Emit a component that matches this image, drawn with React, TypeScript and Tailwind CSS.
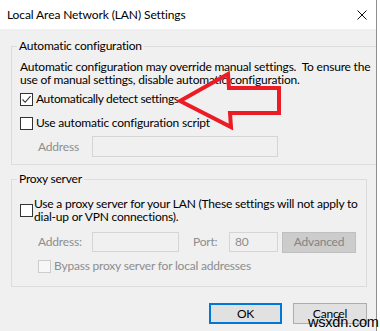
import React from "react";

function CheckBox({ checked = false, disabled = false }: { checked?: boolean; disabled?: boolean }) {
  return (
    <span
      className={
        disabled
          ? "flex h-[13px] w-[13px] shrink-0 items-center justify-center border border-[#cccccc] bg-[#f7f7f7]"
          : "flex h-[13px] w-[13px] shrink-0 items-center justify-center border border-[#333333] bg-white"
      }
    >
      {checked && (
        <svg width="11" height="11" viewBox="0 0 11 11">
          <path d="M1.5 5.5 L4.2 8.3 L9.5 2.2" stroke="#333333" strokeWidth="1.1" fill="none" />
        </svg>
      )}
    </span>
  );
}

export default function App() {
  return (
    <div className="relative flex h-[331px] w-[380px] overflow-hidden bg-white font-['Lato',sans-serif] text-[12px] tracking-[-0.2px] text-black">
      {/* Dialog window */}
      <div className="flex h-full w-[377px] shrink-0 flex-col border-r border-[#8f8f8f]">
        {/* Title bar */}
        <div className="flex h-[29px] shrink-0 items-center justify-between bg-white pl-[7px] pr-[9px]">
          <span className="text-[12px] tracking-[-0.1px]">Local Area Network (LAN) Settings</span>
          <svg width="10" height="10" viewBox="0 0 10 10">
            <path d="M0.5 0.5 L9.5 9.5 M9.5 0.5 L0.5 9.5" stroke="#111" strokeWidth="1" />
          </svg>
        </div>

        {/* Body */}
        <div className="flex flex-1 flex-col overflow-hidden bg-[#f0f0f0]">
          {/* Automatic configuration */}
          <fieldset className="ml-[11px] mt-[9px] w-[356px] shrink-0 border border-[#dcdcdc] px-[8px] pb-[7px] pt-[6px]">
            <legend className="-ml-[3px] px-[2px] leading-[16px]">Automatic configuration</legend>
            <p className="whitespace-pre leading-[13px]">
              {"Automatic configuration may override manual settings.  To ensure the\nuse of manual settings, disable automatic configuration."}
            </p>
            <label className="mt-[5px] flex h-[16px] items-center gap-[3px]">
              <CheckBox checked />
              <span className="tracking-[-0.35px]">Automatically detect settings</span>
            </label>
            <label className="mt-[8px] flex h-[16px] items-center gap-[3px]">
              <CheckBox />
              <span>Use automatic configuration script</span>
            </label>
            <div className="mt-[5px] flex h-[21px] items-center pl-[18px]">
              <span className="w-[54px] text-[#8d8d8d]">Address</span>
              <div className="h-[21px] w-[186px] border border-[#d5d5d5] bg-[#f0f0f0]" />
            </div>
          </fieldset>

          {/* Proxy server */}
          <fieldset className="ml-[11px] mt-[6px] w-[356px] shrink-0 border border-[#dcdcdc] px-[8px] pb-[12px] pt-[10px]">
            <legend className="-ml-[3px] px-[2px] leading-[16px]">Proxy server</legend>
            <label className="flex items-center gap-[1px]">
              <CheckBox />
              <span className="whitespace-pre leading-[13px]">
                {"Use a proxy server for your LAN (These settings will not apply to\ndial-up or VPN connections)."}
              </span>
            </label>
            <div className="mt-[9px] flex h-[20px] items-center pl-[18px]">
              <span className="w-[54px] text-[#8d8d8d]">Address:</span>
              <div className="h-[20px] w-[87px] border border-[#d5d5d5] bg-[#f0f0f0]" />
              <span className="ml-[14px] w-[36px] text-[#8d8d8d]">Port:</span>
              <div className="flex h-[20px] w-[49px] items-center border border-[#d5d5d5] bg-[#f0f0f0] pl-[5px] text-[#8d8d8d]">
                80
              </div>
              <div className="ml-[4px] flex h-[21px] w-[74px] items-center justify-center border border-[#bfbfbf] bg-[#cccccc] text-[#838383]">
                Advanced
              </div>
            </div>
            <label className="mt-[6px] flex h-[16px] items-center gap-[3px] pl-[18px]">
              <CheckBox disabled />
              <span className="text-[#8d8d8d]">Bypass proxy server for local addresses</span>
            </label>
          </fieldset>

          {/* Buttons */}
          <div className="mt-[16px] flex shrink-0 justify-end gap-[11px] pr-[9px]">
            <button className="h-[21px] w-[73px] border-2 border-[#0078d7] bg-[#e1e1e1]">OK</button>
            <button className="h-[21px] w-[74px] border border-[#adadad] bg-[#e1e1e1]">Cancel</button>
          </div>
        </div>
      </div>

      {/* Red annotation arrow */}
      <svg className="pointer-events-none absolute left-0 top-0" width="380" height="331" viewBox="0 0 380 331">
        <polygon
          points="180,101 228,74 229,88 279,88 279,113 230,113 231,127"
          fill="none"
          stroke="#ec1c24"
          strokeWidth="4"
          strokeLinejoin="miter"
        />
      </svg>

      {/* Watermark */}
      <span className="absolute left-[308px] top-[314px] font-['Liberation_Sans',sans-serif] text-[14.5px] leading-[16px] text-black">
        wsxdn.com
      </span>
    </div>
  );
}
